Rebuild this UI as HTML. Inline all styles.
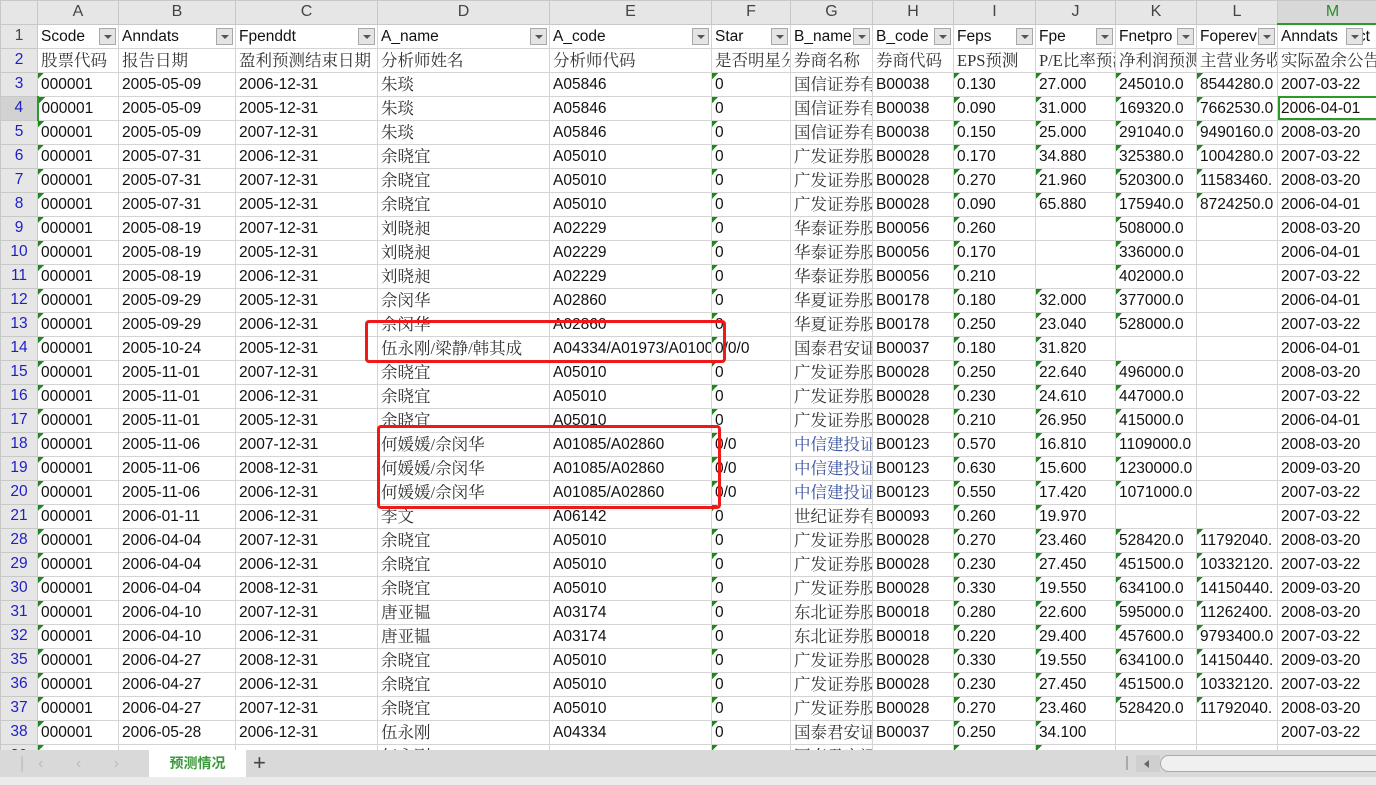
<!DOCTYPE html>
<html><head><meta charset="utf-8"><style>
*{margin:0;padding:0;box-sizing:border-box}
body{width:1376px;height:785px;overflow:hidden;background:#fff;font-family:"Liberation Sans","Noto Sans CJK SC",sans-serif;position:relative}
table{border-collapse:collapse;table-layout:fixed;position:absolute;left:0;top:0;width:1387px}
td,th{border:1px solid #d4d4d4;height:24px;white-space:nowrap;overflow:hidden;font-size:15.5px;color:#111;padding:0 0 0 3px;text-align:left;font-weight:normal;line-height:22px;vertical-align:bottom}
thead th{height:22px;background:#e6e6e6;color:#444;text-align:center;font-size:16px;border-color:#c8c8c8;padding:0;vertical-align:middle}
tbody th{background:#e6e6e6;color:#2020c8;text-align:center;padding:0;border-color:#c8c8c8;vertical-align:middle}
.c{font-family:"Liberation Serif","Noto Serif CJK SC",serif;font-size:16.5px;color:#333}
.t{background:linear-gradient(135deg,#1a8a1a 50%,transparent 50%) no-repeat 0 0/6px 6px}
.f{position:relative;padding-right:20px}
.f i{position:absolute;right:2px;top:3px;width:17px;height:17px;background:#e4e4e4;border:1px solid #a8a8a8}
.f i:after{content:"";position:absolute;left:4px;top:6px;border-left:4px solid transparent;border-right:4px solid transparent;border-top:4px solid #555}
.box{position:absolute;border:3px solid #f01818;border-radius:4px}
</style></head><body>
<table>
<colgroup><col style="width:37px"><col style="width:81px"><col style="width:117px"><col style="width:142px"><col style="width:172px"><col style="width:162px"><col style="width:79px"><col style="width:82px"><col style="width:81px"><col style="width:82px"><col style="width:80px"><col style="width:81px"><col style="width:81px"><col style="width:110px"></colgroup>
<thead><tr><th></th><th>A</th><th>B</th><th>C</th><th>D</th><th>E</th><th>F</th><th>G</th><th>H</th><th>I</th><th>J</th><th>K</th><th>L</th><th style="color:#2a8a2a;background:#d8d8d8;border-bottom:2px solid #2a9a2a">M</th></tr></thead>
<tbody>
<tr><th style="color:#444">1</th><td class="f">Scode<i></i></td><td class="f">Anndats<i></i></td><td class="f">Fpenddt<i></i></td><td class="f">A_name<i></i></td><td class="f">A_code<i></i></td><td class="f">Star<i></i></td><td class="f">B_name<i></i></td><td class="f">B_code<i></i></td><td class="f">Feps<i></i></td><td class="f">Fpe<i></i></td><td class="f">Fnetpro<i></i></td><td class="f">Foperev<i></i></td><td class="f" style="padding-right:0">Anndats<span style="display:inline-block;width:20px"></span>ct<i style="right:24px"></i></td></tr>
<tr><th>2</th><td class="c">股票代码</td><td class="c">报告日期</td><td class="c">盈利预测结束日期</td><td class="c">分析师姓名</td><td class="c">分析师代码</td><td class="c">是否明星分析师</td><td class="c">券商名称</td><td class="c">券商代码</td><td class="c">EPS预测</td><td class="c">P/E比率预测</td><td class="c">净利润预测值</td><td class="c">主营业务收入</td><td class="c">实际盈余公告日</td></tr>
<tr><th>3</th><td class="t">000001</td><td>2005-05-09</td><td>2006-12-31</td><td class="c">朱琰</td><td>A05846</td><td class="t">0</td><td class="c">国信证券有限</td><td>B00038</td><td class="t">0.130</td><td class="t">27.000</td><td class="t">245010.0</td><td class="t">8544280.0</td><td>2007-03-22</td></tr>
<tr><th style="background:#d2d2d2;border-right:2px solid #2a9a2a">4</th><td class="t">000001</td><td>2005-05-09</td><td>2005-12-31</td><td class="c">朱琰</td><td>A05846</td><td class="t">0</td><td class="c">国信证券有限</td><td>B00038</td><td class="t">0.090</td><td class="t">31.000</td><td class="t">169320.0</td><td class="t">7662530.0</td><td style="outline:2px solid #2a9a2a;outline-offset:-2px">2006-04-01</td></tr>
<tr><th>5</th><td class="t">000001</td><td>2005-05-09</td><td>2007-12-31</td><td class="c">朱琰</td><td>A05846</td><td class="t">0</td><td class="c">国信证券有限</td><td>B00038</td><td class="t">0.150</td><td class="t">25.000</td><td class="t">291040.0</td><td class="t">9490160.0</td><td>2008-03-20</td></tr>
<tr><th>6</th><td class="t">000001</td><td>2005-07-31</td><td>2006-12-31</td><td class="c">余晓宜</td><td>A05010</td><td class="t">0</td><td class="c">广发证券股份</td><td>B00028</td><td class="t">0.170</td><td class="t">34.880</td><td class="t">325380.0</td><td class="t">1004280.0</td><td>2007-03-22</td></tr>
<tr><th>7</th><td class="t">000001</td><td>2005-07-31</td><td>2007-12-31</td><td class="c">余晓宜</td><td>A05010</td><td class="t">0</td><td class="c">广发证券股份</td><td>B00028</td><td class="t">0.270</td><td class="t">21.960</td><td class="t">520300.0</td><td class="t">11583460.</td><td>2008-03-20</td></tr>
<tr><th>8</th><td class="t">000001</td><td>2005-07-31</td><td>2005-12-31</td><td class="c">余晓宜</td><td>A05010</td><td class="t">0</td><td class="c">广发证券股份</td><td>B00028</td><td class="t">0.090</td><td class="t">65.880</td><td class="t">175940.0</td><td class="t">8724250.0</td><td>2006-04-01</td></tr>
<tr><th>9</th><td class="t">000001</td><td>2005-08-19</td><td>2007-12-31</td><td class="c">刘晓昶</td><td>A02229</td><td class="t">0</td><td class="c">华泰证券股份</td><td>B00056</td><td class="t">0.260</td><td></td><td class="t">508000.0</td><td></td><td>2008-03-20</td></tr>
<tr><th>10</th><td class="t">000001</td><td>2005-08-19</td><td>2005-12-31</td><td class="c">刘晓昶</td><td>A02229</td><td class="t">0</td><td class="c">华泰证券股份</td><td>B00056</td><td class="t">0.170</td><td></td><td class="t">336000.0</td><td></td><td>2006-04-01</td></tr>
<tr><th>11</th><td class="t">000001</td><td>2005-08-19</td><td>2006-12-31</td><td class="c">刘晓昶</td><td>A02229</td><td class="t">0</td><td class="c">华泰证券股份</td><td>B00056</td><td class="t">0.210</td><td></td><td class="t">402000.0</td><td></td><td>2007-03-22</td></tr>
<tr><th>12</th><td class="t">000001</td><td>2005-09-29</td><td>2005-12-31</td><td class="c">佘闵华</td><td>A02860</td><td class="t">0</td><td class="c">华夏证券股份</td><td>B00178</td><td class="t">0.180</td><td class="t">32.000</td><td class="t">377000.0</td><td></td><td>2006-04-01</td></tr>
<tr><th>13</th><td class="t">000001</td><td>2005-09-29</td><td>2006-12-31</td><td class="c">佘闵华</td><td>A02860</td><td class="t">0</td><td class="c">华夏证券股份</td><td>B00178</td><td class="t">0.250</td><td class="t">23.040</td><td class="t">528000.0</td><td></td><td>2007-03-22</td></tr>
<tr><th>14</th><td class="t">000001</td><td>2005-10-24</td><td>2005-12-31</td><td class="c">伍永刚/梁静/韩其成</td><td>A04334/A01973/A01008</td><td class="t">0/0/0</td><td class="c">国泰君安证券</td><td>B00037</td><td class="t">0.180</td><td class="t">31.820</td><td></td><td></td><td>2006-04-01</td></tr>
<tr><th>15</th><td class="t">000001</td><td>2005-11-01</td><td>2007-12-31</td><td class="c">余晓宜</td><td>A05010</td><td class="t">0</td><td class="c">广发证券股份</td><td>B00028</td><td class="t">0.250</td><td class="t">22.640</td><td class="t">496000.0</td><td></td><td>2008-03-20</td></tr>
<tr><th>16</th><td class="t">000001</td><td>2005-11-01</td><td>2006-12-31</td><td class="c">余晓宜</td><td>A05010</td><td class="t">0</td><td class="c">广发证券股份</td><td>B00028</td><td class="t">0.230</td><td class="t">24.610</td><td class="t">447000.0</td><td></td><td>2007-03-22</td></tr>
<tr><th>17</th><td class="t">000001</td><td>2005-11-01</td><td>2005-12-31</td><td class="c">余晓宜</td><td>A05010</td><td class="t">0</td><td class="c">广发证券股份</td><td>B00028</td><td class="t">0.210</td><td class="t">26.950</td><td class="t">415000.0</td><td></td><td>2006-04-01</td></tr>
<tr><th>18</th><td class="t">000001</td><td>2005-11-06</td><td>2007-12-31</td><td class="c">何媛媛/佘闵华</td><td>A01085/A02860</td><td class="t">0/0</td><td class="c" style="color:#3a50a0">中信建投证券</td><td>B00123</td><td class="t">0.570</td><td class="t">16.810</td><td class="t">1109000.0</td><td></td><td>2008-03-20</td></tr>
<tr><th>19</th><td class="t">000001</td><td>2005-11-06</td><td>2008-12-31</td><td class="c">何媛媛/佘闵华</td><td>A01085/A02860</td><td class="t">0/0</td><td class="c" style="color:#3a50a0">中信建投证券</td><td>B00123</td><td class="t">0.630</td><td class="t">15.600</td><td class="t">1230000.0</td><td></td><td>2009-03-20</td></tr>
<tr><th>20</th><td class="t">000001</td><td>2005-11-06</td><td>2006-12-31</td><td class="c">何媛媛/佘闵华</td><td>A01085/A02860</td><td class="t">0/0</td><td class="c" style="color:#3a50a0">中信建投证券</td><td>B00123</td><td class="t">0.550</td><td class="t">17.420</td><td class="t">1071000.0</td><td></td><td>2007-03-22</td></tr>
<tr><th>21</th><td class="t">000001</td><td>2006-01-11</td><td>2006-12-31</td><td class="c">李文</td><td>A06142</td><td class="t">0</td><td class="c">世纪证券有限</td><td>B00093</td><td class="t">0.260</td><td class="t">19.970</td><td></td><td></td><td>2007-03-22</td></tr>
<tr><th>28</th><td class="t">000001</td><td>2006-04-04</td><td>2007-12-31</td><td class="c">余晓宜</td><td>A05010</td><td class="t">0</td><td class="c">广发证券股份</td><td>B00028</td><td class="t">0.270</td><td class="t">23.460</td><td class="t">528420.0</td><td class="t">11792040.</td><td>2008-03-20</td></tr>
<tr><th>29</th><td class="t">000001</td><td>2006-04-04</td><td>2006-12-31</td><td class="c">余晓宜</td><td>A05010</td><td class="t">0</td><td class="c">广发证券股份</td><td>B00028</td><td class="t">0.230</td><td class="t">27.450</td><td class="t">451500.0</td><td class="t">10332120.</td><td>2007-03-22</td></tr>
<tr><th>30</th><td class="t">000001</td><td>2006-04-04</td><td>2008-12-31</td><td class="c">余晓宜</td><td>A05010</td><td class="t">0</td><td class="c">广发证券股份</td><td>B00028</td><td class="t">0.330</td><td class="t">19.550</td><td class="t">634100.0</td><td class="t">14150440.</td><td>2009-03-20</td></tr>
<tr><th>31</th><td class="t">000001</td><td>2006-04-10</td><td>2007-12-31</td><td class="c">唐亚韫</td><td>A03174</td><td class="t">0</td><td class="c">东北证券股份</td><td>B00018</td><td class="t">0.280</td><td class="t">22.600</td><td class="t">595000.0</td><td class="t">11262400.</td><td>2008-03-20</td></tr>
<tr><th>32</th><td class="t">000001</td><td>2006-04-10</td><td>2006-12-31</td><td class="c">唐亚韫</td><td>A03174</td><td class="t">0</td><td class="c">东北证券股份</td><td>B00018</td><td class="t">0.220</td><td class="t">29.400</td><td class="t">457600.0</td><td class="t">9793400.0</td><td>2007-03-22</td></tr>
<tr><th>35</th><td class="t">000001</td><td>2006-04-27</td><td>2008-12-31</td><td class="c">余晓宜</td><td>A05010</td><td class="t">0</td><td class="c">广发证券股份</td><td>B00028</td><td class="t">0.330</td><td class="t">19.550</td><td class="t">634100.0</td><td class="t">14150440.</td><td>2009-03-20</td></tr>
<tr><th>36</th><td class="t">000001</td><td>2006-04-27</td><td>2006-12-31</td><td class="c">余晓宜</td><td>A05010</td><td class="t">0</td><td class="c">广发证券股份</td><td>B00028</td><td class="t">0.230</td><td class="t">27.450</td><td class="t">451500.0</td><td class="t">10332120.</td><td>2007-03-22</td></tr>
<tr><th>37</th><td class="t">000001</td><td>2006-04-27</td><td>2007-12-31</td><td class="c">余晓宜</td><td>A05010</td><td class="t">0</td><td class="c">广发证券股份</td><td>B00028</td><td class="t">0.270</td><td class="t">23.460</td><td class="t">528420.0</td><td class="t">11792040.</td><td>2008-03-20</td></tr>
<tr><th>38</th><td class="t">000001</td><td>2006-05-28</td><td>2006-12-31</td><td class="c">伍永刚</td><td>A04334</td><td class="t">0</td><td class="c">国泰君安证券</td><td>B00037</td><td class="t">0.250</td><td class="t">34.100</td><td></td><td></td><td>2007-03-22</td></tr>
<tr><th>39</th><td class="t">000001</td><td>2006-05-28</td><td>2007-12-31</td><td class="c">伍永刚</td><td>A04334</td><td class="t">0</td><td class="c">国泰君安证券</td><td>B00037</td><td class="t">0.340</td><td class="t">24.100</td><td></td><td></td><td>2008-03-20</td></tr>
</tbody></table>
<div class="box" style="left:365px;top:320px;width:361px;height:43px"></div>
<div class="box" style="left:377px;top:425px;width:344px;height:84px"></div>
<div style="position:absolute;left:0;top:750px;width:1376px;height:27px;background:#d9d9d9">
 <div style="position:absolute;left:20px;top:5px;color:#bbb;font-size:16px;letter-spacing:14px">|‹ ‹ › ›|</div>
 <div style="position:absolute;left:149px;top:0;width:97px;height:27px;background:#fff;color:#3a9a3a;font-weight:bold;font-size:14px;text-align:center;line-height:27px;font-family:'Noto Sans CJK SC',sans-serif">预测情况</div>
 <div style="position:absolute;left:253px;top:1px;font-size:22px;color:#444;line-height:24px">+</div>
 <div style="position:absolute;left:1126px;top:6px;width:2px;height:14px;border-left:1px solid #aaa;border-right:1px solid #aaa"></div>
 <div style="position:absolute;left:1136px;top:5px;width:24px;height:17px;background:#cfcfcf"></div>
 <div style="position:absolute;left:1144px;top:10px;border-top:4px solid transparent;border-bottom:4px solid transparent;border-right:5px solid #666"></div>
 <div style="position:absolute;left:1160px;top:5px;width:230px;height:17px;background:#f0f0f0;border:1px solid #aaa;border-radius:9px"></div>
</div>
<div style="position:absolute;left:0;top:777px;width:1376px;height:8px;background:#ebebeb"></div>
</body></html>
